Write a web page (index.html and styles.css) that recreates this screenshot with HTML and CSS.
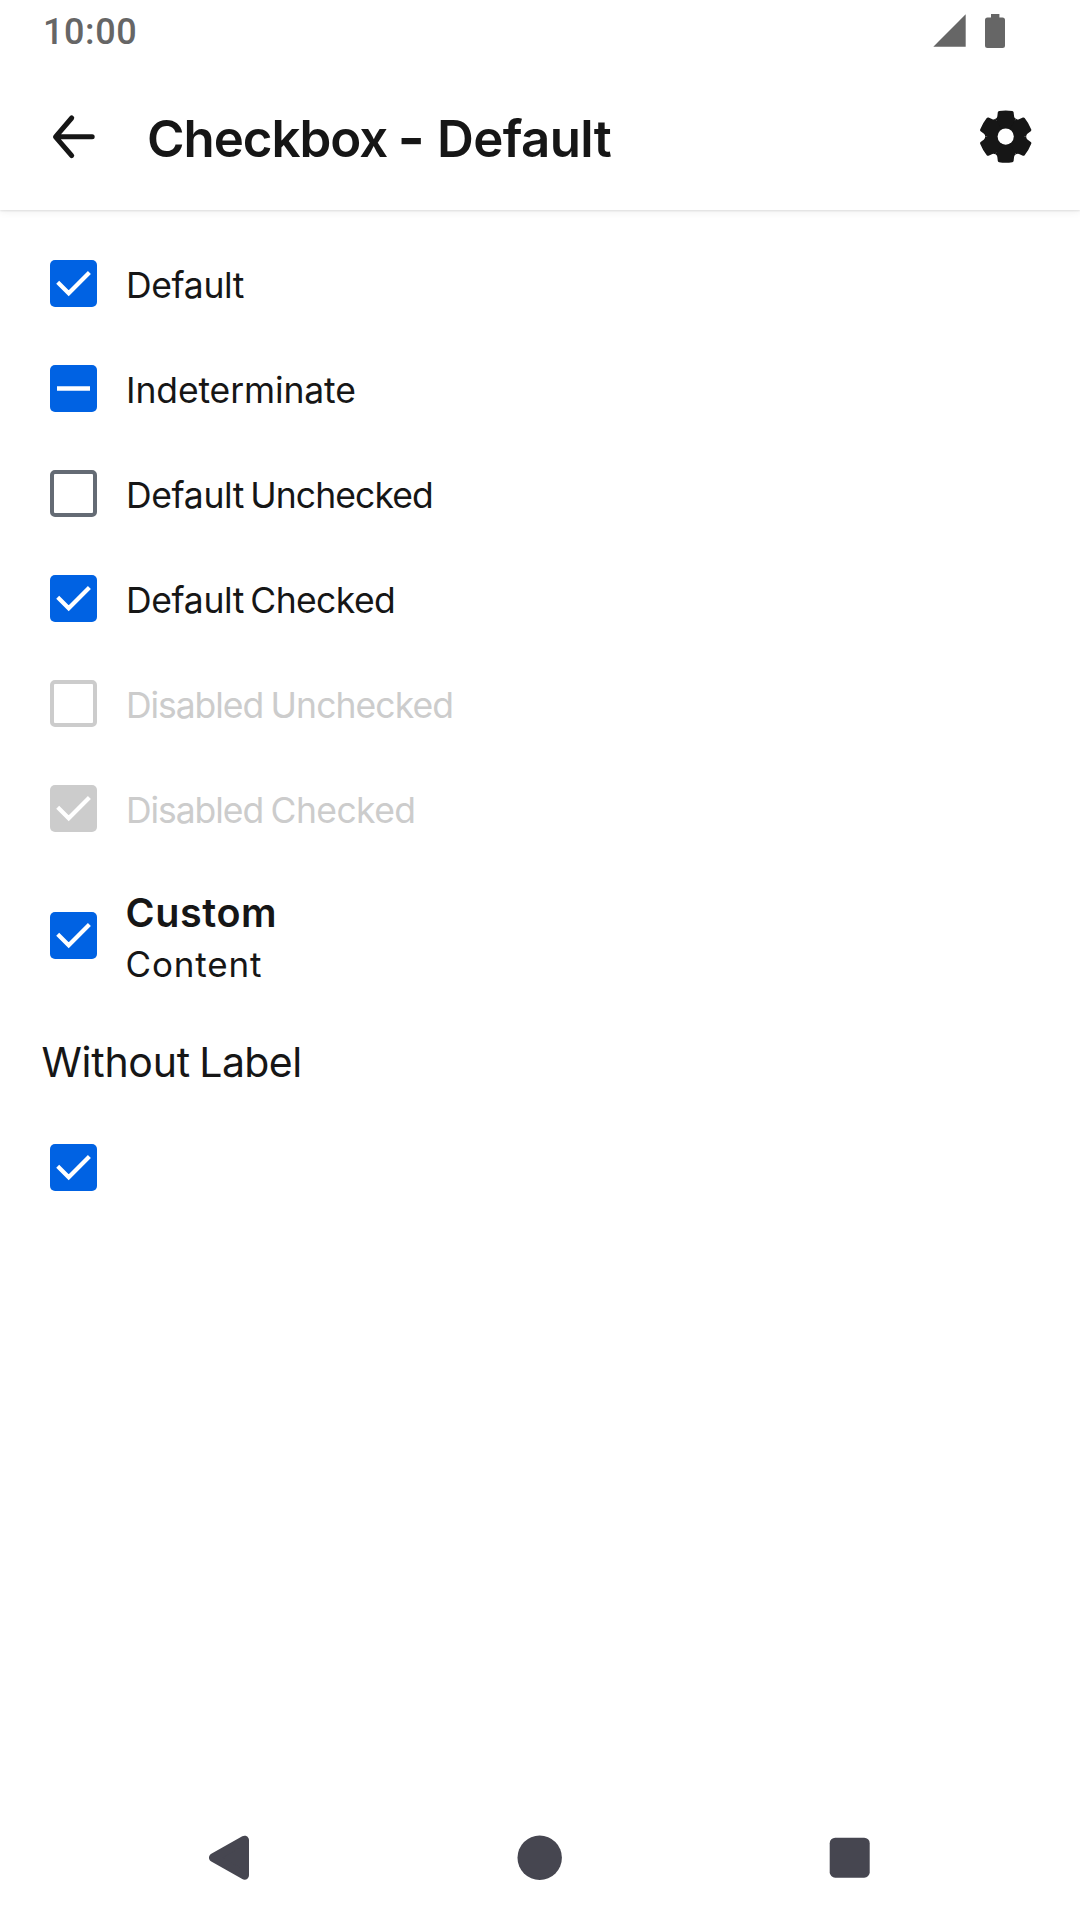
FILE: index.html
```html
<!DOCTYPE html>
<html lang="en">
<head>
<meta charset="utf-8">
<title>Checkbox - Default</title>
<link rel="stylesheet" href="styles.css">
</head>
<body>
<svg class="defs" aria-hidden="true">
  <symbol id="check" viewBox="0 0 47 47"><path d="M7.700 22.200 18.700 33.200 39.400 12.500" fill="none" stroke="#fff" stroke-width="4.200"/></symbol>
  <symbol id="gear" viewBox="-32 -32 64 64">
    <defs><path id="tooth" d="M0 0-10.25-17.75Q-8.7-18.6-8.4-20.2L-7.9-24.4Q-7.7-25.5-6.6-25.7Q0-26.7 6.6-25.7Q7.7-25.5 7.9-24.4L8.4-20.2Q8.7-18.6 10.25-17.75Z"/></defs>
    <circle r="18.5"/>
    <use href="#tooth"/><use href="#tooth" transform="rotate(60)"/><use href="#tooth" transform="rotate(120)"/>
    <use href="#tooth" transform="rotate(180)"/><use href="#tooth" transform="rotate(240)"/><use href="#tooth" transform="rotate(300)"/>
    <circle r="8.1" fill="#fff"/>
  </symbol>
</svg>
<div class="screen">
  <div class="status">
    <span class="time">10:00</span>
    <span class="status-icons">
      <svg width="33" height="33" viewBox="0 0 33 33"><path d="M.3 32.7H32.7V.3Z"/></svg>
      <svg width="20" height="34" viewBox="0 0 20 34"><path d="M6 0h8.4v3.4H17.5Q20 3.4 20 5.900V31.500Q20 34 17.500 34H2.500Q0 34 0 31.500V5.900Q0 3.400 2.500 3.400H6Z"/></svg>
    </span>
  </div>
  <header class="appbar">
    <svg class="back" width="48" height="48" viewBox="0 0 48 48"><path d="M41.200 23.800H5M20.700 5 4.500 23.800 20.700 42.600"/></svg>
    <h1><span class="t-checkbox">Checkbox</span> <span class="t-dash">-</span> <span class="t-default">Default</span></h1>
    <svg class="gear" width="64" height="64" viewBox="0.300 0.400 64 64"><use href="#gear" width="64" height="64"/></svg>
  </header>
  <main>
    <label class="row"><span class="box on"><svg><use href="#check"/></svg></span><span class="text"><span class="w-default">Default</span></span></label>
    <label class="row"><span class="box on"><svg viewBox="0 0 47 47"><path d="M7 23.500H40" stroke="#fff" stroke-width="4.500"/></svg></span><span class="text"><span class="w-ind">Indeterminate</span></span></label>
    <label class="row"><span class="box"></span><span class="text"><span class="w-default">Default</span> <span class="w-unchecked">Unchecked</span></span></label>
    <label class="row"><span class="box on"><svg><use href="#check"/></svg></span><span class="text"><span class="w-default">Default</span> <span class="w-checked">Checked</span></span></label>
    <label class="row disabled"><span class="box"></span><span class="text"><span class="w-disabled">Disabled</span> <span class="w-unchecked">Unchecked</span></span></label>
    <label class="row disabled"><span class="box on"><svg><use href="#check"/></svg></span><span class="text"><span class="w-disabled">Disabled</span> <span class="w-checked">Checked</span></span></label>
    <label class="row custom"><span class="box on"><svg><use href="#check"/></svg></span><span class="stack"><strong>Custom</strong><span class="content">Content</span></span></label>
    <h2><span class="t-without">Without</span> <span class="t-label">Label</span></h2>
    <label class="row"><span class="box on"><svg><use href="#check"/></svg></span></label>
  </main>
  <nav>
    <svg width="46" height="46" viewBox="0 0 46 46"><path d="M6.500 22.700 37.500 5.200V40.200Z" stroke="#464650" stroke-width="9" stroke-linejoin="round"/></svg>
    <svg width="46" height="46" viewBox="0 0 46 46"><circle cx="22.700" cy="22.700" r="22.200"/></svg>
    <svg width="46" height="46" viewBox="0 0 46 46"><rect x="2.700" y="2.700" width="40" height="40" rx="5.500"/></svg>
  </nav>
</div>
</body>
</html>
```
FILE: styles.css
```css
*{box-sizing:border-box}
body{margin:0;background:#fff;color:#161616;font-family:Inter,"Liberation Sans",sans-serif}
svg{display:block}
.defs{position:absolute;width:0;height:0}
.screen{width:1080px;height:1920px;display:flex;flex-direction:column}
.status{height:63px;display:flex;justify-content:space-between;padding:0 75px 0 43px;color:#666}
.time{font:500 36px/64px Roboto,sans-serif;letter-spacing:.6px}
.status-icons{display:flex;gap:19px;padding-top:14px;fill:#666}
.appbar{height:147px;display:flex;align-items:center;padding:0 42px 0 51px;box-shadow:0 1px 2px rgba(0,0,0,.1),0 2px 8px rgba(0,0,0,.06);clip-path:inset(0 0 -12px 0)}
.back{fill:none;stroke:#161616;stroke-width:5;stroke-linecap:round;stroke-linejoin:round}
h1{margin:5px auto 0 48px;font-size:51px;line-height:62px;font-weight:600;word-spacing:-2.4px}
.t-checkbox{letter-spacing:-1.05px}
.t-dash{font-size:59px;line-height:1px;letter-spacing:1.6px;vertical-align:-2px}
.t-default{letter-spacing:-.63px}
.gear{fill:#161616}
main{padding-top:21px}
.row{display:flex;align-items:center;height:105px;padding-left:50px}
.box{width:47px;height:47px;flex:none;border:4px solid #646b74;border-radius:5px}
.box.on{border:0;background:#0062e3}
.box svg{width:47px;height:47px}
.disabled{color:#ccc}
.disabled .box{border-color:#ccc}
.disabled .box.on{background:#ccc}
.text{margin:5px 0 0 29px;font-size:35.5px;line-height:44px;word-spacing:-3.8px}
.disabled .text{word-spacing:-2.5px}
.w-default{letter-spacing:-.35px}
.w-ind{letter-spacing:-.12px}
.w-unchecked{letter-spacing:-.92px}
.w-checked{letter-spacing:-.6px}
.w-disabled{letter-spacing:-1.07px}
.custom{height:149px}
.stack{display:flex;flex-direction:column;margin:0 0 0 28.5px}
strong{padding-top:1px;font-size:39.5px;line-height:56px;font-weight:600;letter-spacing:.6px}
.content{margin-top:-1px;font-size:35px;line-height:48px;letter-spacing:.85px}
h2{margin:0 0 0 41.5px;font-size:41px;line-height:105px;font-weight:400;word-spacing:-2px}
.t-without{letter-spacing:-.28px}
.t-label{letter-spacing:-.6px}
nav{margin-top:auto;height:125px;display:flex;justify-content:center;align-items:center;gap:264px;padding-right:1px;fill:#464650}
```
